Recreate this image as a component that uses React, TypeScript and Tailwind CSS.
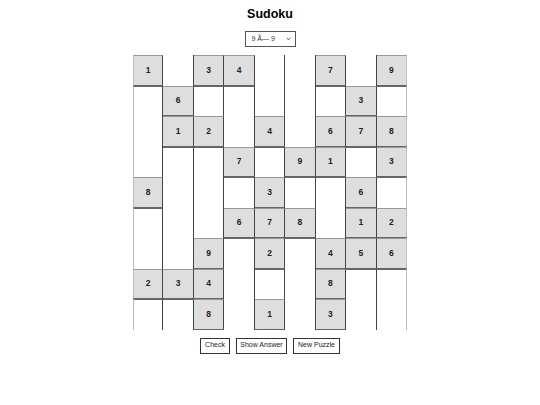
import React from 'react';

const PUZZLE: number[][] = [
  [1, 0, 3, 4, 0, 0, 7, 0, 9],
  [0, 6, 0, 0, 0, 0, 0, 3, 0],
  [0, 1, 2, 0, 4, 0, 6, 7, 8],
  [0, 0, 0, 7, 0, 9, 1, 0, 3],
  [8, 0, 0, 0, 3, 0, 0, 6, 0],
  [0, 0, 0, 6, 7, 8, 0, 1, 2],
  [0, 0, 9, 0, 2, 0, 4, 5, 6],
  [2, 3, 4, 0, 0, 0, 8, 0, 0],
  [0, 0, 8, 0, 1, 0, 3, 0, 0],
];

const Cell: React.FC<{ value: number; col: number; above: number }> = ({ value, col, above }) => {
  const given = value !== 0;
  const last = col === 8;
  const first = col === 0;
  return (
    <div
      className={`h-[30.5px] flex items-center justify-center text-[8.5px] font-bold text-[#222] border-r ${
        last ? 'border-r-[#bbb]' : 'border-r-[#444]'
      } ${first ? 'border-l border-l-[#bbb]' : ''} ${
        given ? 'bg-[#dedede] border-t border-b border-t-[#999] border-b-[#666]' : above ? 'bg-white border-t border-t-[#666]' : 'bg-white'
      }`}
    >
      {given ? value : ''}
    </div>
  );
};

export default function App() {
  return (
    <div className="w-[540px] h-[405px] bg-white flex flex-col items-center font-['Liberation_Sans',Arial,sans-serif]">
      <h1 className="mt-[7px] text-[12.5px] font-bold text-black leading-[15px]">Sudoku</h1>
      <div className="mt-[9px] relative w-[51px] h-[16px]">
        <select
          className="block appearance-none w-[51px] h-[16px] border border-[#555] text-[7px] leading-[14px] text-[#333] pl-[6px] py-0 bg-white rounded-none outline-none"
          defaultValue="9"
        >
          <option value="9">9 Ã— 9</option>
        </select>
        <svg className="absolute right-[5px] top-[6px] pointer-events-none" width="5" height="4" viewBox="0 0 5 4">
          <path d="M0.5 0.8 L2.5 2.8 L4.5 0.8" fill="none" stroke="#444" strokeWidth="0.9" />
        </svg>
      </div>
      <div className="mt-[8px] w-[274px] grid grid-cols-9">
        {PUZZLE.map((row, r) =>
          row.map((v, c) => (
            <Cell key={`${r}-${c}`} value={v} col={c} above={r > 0 ? PUZZLE[r - 1][c] : 0} />
          ))
        )}
      </div>
      <div className="mt-[8px] flex gap-[6px]">
        <button className="h-[16px] w-[30px] border border-[#333] bg-white text-[7px] text-[#222]">Check</button>
        <button className="h-[16px] w-[51px] border border-[#333] bg-white text-[7px] text-[#222]">Show Answer</button>
        <button className="h-[16px] w-[47px] border border-[#333] bg-white text-[7px] text-[#222]">New Puzzle</button>
      </div>
    </div>
  );
}
